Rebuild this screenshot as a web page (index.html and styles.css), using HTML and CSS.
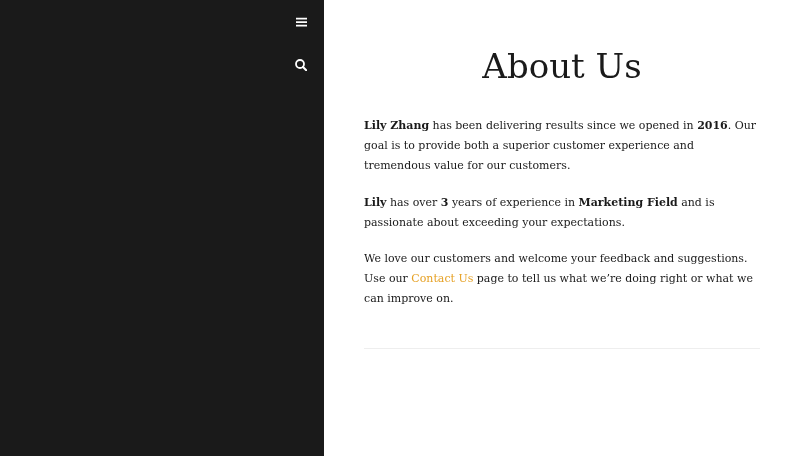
FILE: index.html
```html
<!DOCTYPE html>
<html lang="en">
<head>
    <meta charset="UTF-8">
    <meta name="viewport" content="width=device-width, initial-scale=1.0">
    <title>About Us</title>
    <link rel="stylesheet" href="styles.css">
</head>
<body>
<div class="page">
    <aside class="sidebar">
        <button class="side-btn" aria-label="Menu">
            <svg width="12" height="10" viewBox="0 0 12 10"><path fill="#fff" d="M1 .8h11v1.8H1zM1 4.2h11v1.8H1zM1 7.8h11v1.8H1z"/></svg>
        </button>
        <button class="side-btn" aria-label="Search">
            <svg width="12" height="12" viewBox="0 0 12 12"><circle cx="5" cy="5" r="4" fill="none" stroke="#fff" stroke-width="1.8"/><path d="M8 8l3.2 3.2" stroke="#fff" stroke-width="2" stroke-linecap="round"/></svg>
        </button>
    </aside>
    <main class="content">
        <h1 class="title">About Us</h1>
        <p><strong>Lily Zhang</strong> has been delivering results since we opened in <strong>2016</strong>. Our goal is to provide both a superior customer experience and tremendous value for our customers.</p>
        <p><strong>Lily</strong> has over <strong>3</strong> years of experience in <strong>Marketing Field</strong> and is passionate about exceeding your expectations.</p>
        <p>We love our customers and welcome your feedback and suggestions. Use our <a href="#">Contact Us</a> page to tell us what we’re doing right or what we can improve on.</p>
        <hr class="rule">
    </main>
</div>
</body>
</html>
```

FILE: styles.css
```css
body {
    margin: 0;
    font-family: "DejaVu Serif", serif;
    background-color: #fff;
    color: #1a1a1a;
}
.page {
    display: flex;
    height: 456px;
    overflow: hidden;
}
.sidebar {
    width: 324px;
    background-color: #1a1a1a;
    display: flex;
    flex-direction: column;
    align-items: flex-end;
    gap: 1px;
    padding-top: 1px;
    box-sizing: border-box;
}
.side-btn {
    width: 46px;
    height: 42px;
    padding: 0;
    border: none;
    background: none;
    display: flex;
    align-items: center;
    justify-content: center;
}
.content {
    width: 396px;
    padding: 0 40px;
    will-change: transform;
}
.title {
    margin: 45px 0 29px;
    font-size: 34px;
    font-weight: 400;
    line-height: 42px;
    text-align: center;
}
.content p {
    margin: 0 0 16.5px;
    font-size: 10.99px;
    line-height: 20px;
}
.content a {
    color: #e6a125;
    text-decoration: none;
}
.rule {
    margin: 39px 0 0;
    border: none;
    border-top: 1px solid #eee;
}
```
